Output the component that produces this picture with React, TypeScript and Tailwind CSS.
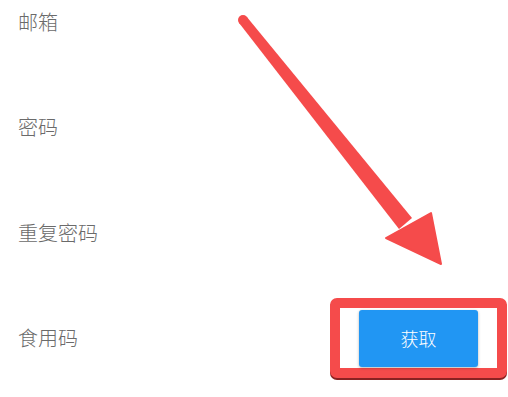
import React from "react";

// 注册表单截图 — 带红色标注箭头和框

const fieldFont = { fontFamily: '"Noto Sans CJK SC", "Noto Sans", sans-serif' };

function Row({ label, top }: { label: string; top: string }) {
  return (
    <div className={`flex h-[44px] items-center pl-[18px] ${top}`}>
      <span className="text-[20px] font-light leading-none text-[#6a6a6a]">{label}</span>
    </div>
  );
}

export default function App() {
  return (
    <div className="relative h-[397px] w-[508px] overflow-hidden bg-white" style={fieldFont}>
      <div className="flex flex-col">
        <Row label="邮箱" top="mt-0" />
        <Row label="密码" top="mt-[61px]" />
        <Row label="重复密码" top="mt-[62px]" />

        <div className="mt-[43px] flex h-[80px] items-center justify-between pl-[18px] pr-[1px]">
          <span className="text-[20px] font-light leading-none text-[#6a6a6a]">食用码</span>
          <div className="flex h-[80px] w-[177px] items-center justify-center rounded-[7px] border-[10px] border-[#f54b4b] bg-white shadow-[0_2px_0_#8a2222]">
            <button
              type="button"
              className="h-[57px] w-[119px] rounded-[3px] bg-[#2196f3] text-[18px] font-light text-white shadow-[0_1px_3px_rgba(0,0,0,0.3)]"
            >
              获取
            </button>
          </div>
        </div>
      </div>

      {/* 标注箭头 */}
      <svg className="pointer-events-none absolute left-0 top-0" width="508" height="397" viewBox="0 0 508 397">
        <circle cx="243" cy="20" r="5" fill="#f54b4b" />
        <polygon points="246.9,16.9 412,218 399,229 239.1,23.1" fill="#f54b4b" />
        <polygon points="441,264 386,238 431,213" fill="#f54b4b" stroke="#f54b4b" strokeWidth="2" strokeLinejoin="round" />
      </svg>
    </div>
  );
}
